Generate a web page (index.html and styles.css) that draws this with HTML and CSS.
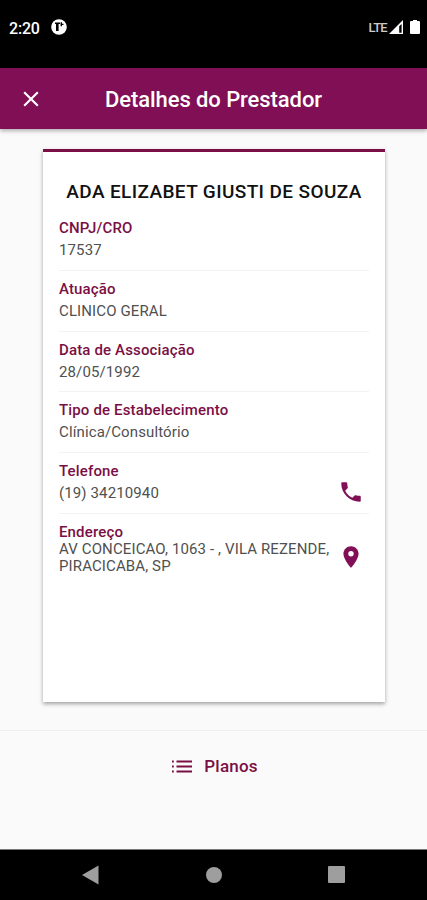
FILE: index.html
```html
<!DOCTYPE html>
<html lang="pt-BR">
<head>
  <meta charset="UTF-8" />
  <meta name="viewport" content="width=device-width, initial-scale=1.0"/>
  <title>Detalhes do Prestador</title>
  <link rel="stylesheet" href="styles.css">
</head>
<body>

<div class="status-bar">
  <span class="clock">2:20</span>
  <svg class="status-app" width="16" height="16" viewBox="0 0 16 16">
    <circle cx="8" cy="8" r="7.8" fill="#fff"/>
    <path d="M4 3.500h5v1.500H7.600v7H5V5H4zM9.600 3.200h1.400v1.600h1.500v1.200H11v1.200H9.600z" fill="#000"/>
  </svg>
  <span class="network">LTE</span>
  <svg class="signal" width="14" height="14" viewBox="0 0 14 14">
    <path d="M0 14 14 0v14z" fill="#fff"/>
    <path d="M10.200 6.200 12.600 4v8.800h-2.400z" fill="#000"/>
  </svg>
  <svg width="10" height="14" viewBox="0 0 10 14">
    <path d="M3 0h4v1h2q1 0 1 1V13q0 1-1 1H1q-1 0-1-1V2q0-1 1-1h2z" fill="#fff"/>
  </svg>
</div>

<header>
  <button class="close-btn" aria-label="Fechar">
    <svg width="26" height="26" viewBox="0 0 24 24"><path d="M19 6.410 17.590 5 12 10.590 6.410 5 5 6.410 10.590 12 5 17.590 6.410 19 12 13.410 17.590 19 19 17.590 13.410 12z" fill="#fff"/></svg>
  </button>
  <h1>Detalhes do Prestador</h1>
</header>

<main>
  <section class="card">
    <h2>ADA ELIZABET GIUSTI DE SOUZA</h2>
    <div class="item">
      <div class="label">CNPJ/CRO</div>
      <div class="value">17537</div>
    </div>
    <div class="item">
      <div class="label">Atuação</div>
      <div class="value">CLINICO GERAL</div>
    </div>
    <div class="item">
      <div class="label">Data de Associação</div>
      <div class="value">28/05/1992</div>
    </div>
    <div class="item">
      <div class="label">Tipo de Estabelecimento</div>
      <div class="value">Clínica/Consultório</div>
    </div>
    <div class="item with-icon">
      <div>
        <div class="label">Telefone</div>
        <div class="value">(19) 34210940</div>
      </div>
      <svg class="phone" width="26" height="26" viewBox="0 0 24 24"><path d="M6.620 10.790c1.440 2.830 3.760 5.140 6.590 6.590l2.200-2.200c.27-.27.67-.36 1.020-.24 1.120.37 2.330.57 3.570.57.55 0 1 .45 1 1V20c0 .55-.45 1-1 1-9.390 0-17-7.610-17-17 0-.55.45-1 1-1h3.500c.55 0 1 .45 1 1 0 1.250.2 2.450.57 3.570.11.35.03.74-.25 1.020l-2.200 2.200z"/></svg>
    </div>
    <div class="item with-icon address">
      <div>
        <div class="label">Endereço</div>
        <div class="value">AV CONCEICAO, 1063 - , VILA REZENDE, PIRACICABA, SP</div>
      </div>
      <svg class="pin" width="26" height="26" viewBox="0 0 24 24"><path d="M12 2C8.130 2 5 5.130 5 9c0 5.250 7 13 7 13s7-7.750 7-13c0-3.870-3.130-7-7-7zm0 9.500a2.500 2.500 0 0 1 0-5 2.500 2.500 0 0 1 0 5z"/></svg>
    </div>
  </section>
</main>

<footer>
  <button class="plans-btn">
    <svg width="20" height="13" viewBox="0 0 20 13"><path d="M0 .5h1.800v2H0zM4.500 .5H20v2H4.500zM0 5.500h1.800v2H0zM4.500 5.500H20v2H4.500zM0 10.500h1.800v2H0zM4.500 10.500H20v2H4.500z"/></svg>
    <span>Planos</span>
  </button>
</footer>

<div class="system-nav">
  <svg width="17" height="20" viewBox="0 0 17 20"><path d="M0 10 16.500 .5v19z"/></svg>
  <svg width="16" height="16" viewBox="0 0 16 16"><circle cx="8" cy="8" r="8"/></svg>
  <svg width="17" height="17" viewBox="0 0 17 17"><rect width="17" height="17" rx="1"/></svg>
</div>

</body>
</html>
```

FILE: styles.css
```css
:root {
  --primary: #800f55;
  --accent: #7a0f45;
  --bg: #fafafa;
  --text: #505050;
}
* {
  box-sizing: border-box;
}
body {
  margin: 0;
  height: 900px;
  display: flex;
  flex-direction: column;
  font-family: Roboto, sans-serif;
  background-color: var(--bg);
  color: var(--text);
}
button {
  padding: 0;
  border: none;
  background: none;
  font-family: inherit;
  cursor: pointer;
}
svg {
  display: block;
  flex: none;
}
.status-bar {
  height: 68px;
  padding: 0 7px 14px 9px;
  display: flex;
  align-items: center;
  background-color: #000;
  color: #fff;
}
.clock {
  width: 42px;
  padding-top: 2px;
  font-size: 16px;
  font-weight: 500;
  letter-spacing: -0.2px;
}
.network {
  margin-left: auto;
  margin-right: 2px;
  font-size: 13px;
  font-weight: 500;
  letter-spacing: -0.7px;
  color: #ccc;
}
.signal {
  margin-right: 7px;
}
header {
  height: 61px;
  display: flex;
  align-items: center;
  padding: 0 18px;
  background-color: var(--primary);
  color: white;
  box-shadow: 0 2px 4px rgba(0,0,0,0.3);
}
h1 {
  flex: 1;
  margin: 0 26px 0 0;
  padding-top: 2px;
  font-size: 22px;
  font-weight: 500;
  letter-spacing: -0.08px;
  text-align: center;
}
main {
  flex: 1;
  padding: 20px 42px 28px 43px;
}
.card {
  height: 553px;
  padding: 28px 16px 0;
  background: white;
  border-top: 3px solid var(--accent);
  box-shadow: 0 2px 4px rgba(0,0,0,0.35);
}
h2 {
  margin: 0;
  height: 30px;
  line-height: 24px;
  font-size: 19px;
  font-weight: 500;
  letter-spacing: 0.39px;
  text-align: center;
  white-space: nowrap;
  color: #111;
}
.item {
  height: 60.8px;
  padding-top: 8px;
  border-bottom: 1px solid #f3f3f3;
}
.item:last-child {
  border-bottom: none;
}
.label {
  line-height: 21px;
  font-size: 15px;
  font-weight: 500;
  letter-spacing: 0.15px;
  color: var(--accent);
}
.value {
  line-height: 23px;
  font-size: 15px;
  letter-spacing: 0.12px;
}
.with-icon {
  display: flex;
  justify-content: space-between;
}
.with-icon svg {
  margin-right: 5px;
  fill: var(--primary);
}
.phone {
  margin-top: 18px;
}
.pin {
  margin-top: 22px;
}
.address {
  height: auto;
}
.address .value {
  margin-top: -2px;
  line-height: 17px;
}
footer {
  height: 119px;
  padding: 24px 0 0 3px;
  display: flex;
  align-items: flex-start;
  justify-content: center;
  border-top: 1px solid #eee;
}
.plans-btn {
  height: 22px;
  display: flex;
  align-items: center;
  gap: 12px;
  font-size: 17px;
  font-weight: 500;
  letter-spacing: 0.2px;
  color: var(--accent);
  fill: var(--accent);
}
.system-nav {
  height: 51px;
  padding: 0 82px 1px;
  display: flex;
  align-items: center;
  justify-content: space-between;
  background-color: #000;
  border-top: 1px solid #777;
  fill: #9e9e9e;
}
```
